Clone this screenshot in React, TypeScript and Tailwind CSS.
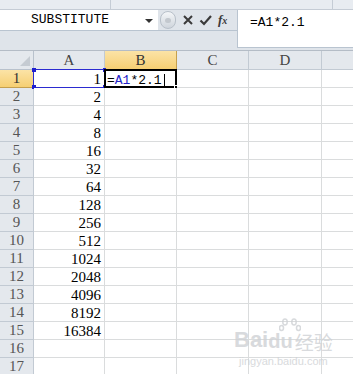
import React from 'react';

const mono = { fontFamily: '"Liberation Mono", "DejaVu Sans Mono", monospace' };
const serif = { fontFamily: '"Liberation Serif", "DejaVu Serif", serif' };

const values = [1, 2, 4, 8, 16, 32, 64, 128, 256, 512, 1024, 2048, 4096, 8192, 16384, null, null];
// E is only partly visible, its letter falls outside the window
const cols = [
  { key: 'A', label: 'A', w: 'w-[71px]' },
  { key: 'B', label: 'B', w: 'w-[72px]' },
  { key: 'C', label: 'C', w: 'w-[72px]' },
  { key: 'D', label: 'D', w: 'w-[73px]' },
  { key: 'E', label: '', w: 'w-[72px]' },
];

function FormulaBar() {
  return (
    <div className="flex h-[40px] bg-[#dfe4ea]">
      <div className="w-[237px] flex flex-col">
        <div className="flex h-[21px] items-center bg-white border-b border-[#b9c4d0]">
          <div className="w-[158px] h-full flex items-center justify-center relative text-[13px] text-black" style={mono}>
            <span className="pr-[18px]">SUBSTITUTE</span>
            <span className="absolute right-[5px] top-[9px] w-0 h-0 border-l-[4px] border-r-[4px] border-t-[4px] border-l-transparent border-r-transparent border-t-[#333]" />
          </div>
          <div className="flex-1 h-full bg-[#dfe4ea] flex items-center">
            <div className="w-[16px] h-[18px] rounded-full bg-gradient-to-b from-[#f4f6f8] to-[#cfd5dc] border border-[#b8c0c9] flex items-center justify-center ml-[2px]">
              <div className="w-[6px] h-[5px] rounded-full bg-[#c3c8ce]" />
            </div>
            <svg width="12" height="12" viewBox="0 0 12 12" className="ml-[6px]">
              <path d="M2 2 L10 10 M10 2 L2 10" stroke="#3a3a3a" strokeWidth="2" />
            </svg>
            <svg width="13" height="12" viewBox="0 0 13 12" className="ml-[5px]">
              <path d="M1.5 6.5 L5 10 L12 2" stroke="#3a3a3a" strokeWidth="2.2" fill="none" />
            </svg>
            <span className="ml-[6px] text-[13px] italic font-bold text-[#3a3a3a]" style={serif}>
              f<span className="text-[10px]">x</span>
            </span>
          </div>
        </div>
        <div className="flex-1" />
      </div>
      <div className="flex-1 h-[38px] bg-white border-l border-b border-[#b9c4d0] pl-[12px] pt-[3px] text-[13px] text-black" style={mono}>
        =A1*2.1
      </div>
    </div>
  );
}

function HeaderRow() {
  return (
    <div className="flex h-[20px] border-t border-[#b4bcc6]">
      <div className="w-[34px] flex-none bg-[#e4e8ed] border-r border-b border-[#b8c1cc] relative">
        <svg width="10" height="10" viewBox="0 0 10 10" className="absolute right-[3px] bottom-[3px]">
          <polygon points="10,0 10,10 0,10" fill="#c5cbd2" />
        </svg>
      </div>
      {cols.map((c) => (
        <div
          key={c.key}
          className={`${c.w} flex-none flex items-center justify-center border-r border-b text-[15px] ${
            c.key === 'B'
              ? 'bg-gradient-to-b from-[#fbe3a6] to-[#f6cf72] border-[#c5a04e] text-[#333]'
              : 'bg-[#e4e8ed] border-[#c2cad3] text-[#444]'
          }`}
          style={serif}
        >
          {c.label}
        </div>
      ))}
    </div>
  );
}

function Row({ n, v }: { n: number; v: number | null }) {
  const sel = n === 1;
  return (
    <div className="flex h-[18px]">
      <div
        className={`w-[34px] flex-none flex items-center justify-center border-r border-b text-[15px] ${
          sel
            ? 'bg-gradient-to-b from-[#fbe3a6] to-[#f6cf72] border-[#c5a04e] text-[#333]'
            : 'bg-[#e4e8ed] border-[#c2cad3] text-[#555]'
        }`}
        style={serif}
      >
        {n}
      </div>
      {cols.map((c) => (
        <div key={c.key} className={`${c.w} flex-none relative border-r border-b border-[#dadcdd] bg-white text-[15px] text-black`} style={serif}>
          {c.key === 'A' && v !== null && (
            <span className="absolute right-[3px] top-0 leading-[18px]">{v}</span>
          )}
          {sel && c.key === 'A' && (
            <>
              <div className="absolute -left-[1px] -top-[1px] -right-[1px] -bottom-[1px] border border-[#2b2bd0]" />
              <div className="absolute -left-[2px] -top-[2px] w-[4px] h-[4px] bg-[#2020d0]" />
              <div className="absolute -left-[2px] -bottom-[2px] w-[4px] h-[4px] bg-[#2020d0]" />
              <div className="absolute -right-[2px] -top-[2px] w-[3px] h-[4px] bg-[#2020d0]" />
              <div className="absolute -right-[2px] -bottom-[2px] w-[3px] h-[4px] bg-[#2020d0]" />
            </>
          )}
          {sel && c.key === 'B' && (
            <>
              <div className="absolute -left-[1px] -top-[1px] -right-[1px] -bottom-[1px] border-2 border-black" />
              <span className="absolute left-[2px] top-[1px] text-[13px]" style={mono}>
                =<span className="text-[#2323c8]">A1</span>*2.1<span className="inline-block w-[1px] h-[13px] bg-black align-middle ml-[2px]" />
              </span>
              <div className="absolute -right-[3px] -bottom-[3px] w-[5px] h-[5px] bg-black border border-white" />
            </>
          )}
        </div>
      ))}
    </div>
  );
}

export default function App() {
  return (
    <div className="w-[353px] h-[374px] overflow-hidden bg-white relative">
      <div className="h-[10px] bg-[#e8ecf1] border-b border-[#c5ccd5] flex">
        <div className="w-[111px] border-r border-[#c5ccd5]" />
        <div className="w-[222px] border-r border-[#c5ccd5]" />
      </div>
      <FormulaBar />
      <HeaderRow />
      {values.map((v, i) => (
        <Row key={i} n={i + 1} v={v} />
      ))}
      <div className="absolute left-[234px] top-[318px] flex flex-col items-center text-[#cfd2d5] opacity-80 pointer-events-none">
        <svg width="22" height="14" viewBox="0 0 22 14" className="ml-[14px] -mb-[3px]">
          <g fill="none" stroke="#cfd2d5" strokeWidth="1.5">
            <ellipse cx="6" cy="4" rx="2.2" ry="3" />
            <ellipse cx="15" cy="4" rx="2.2" ry="3" />
            <ellipse cx="2.5" cy="10" rx="2" ry="2.5" />
            <ellipse cx="19.5" cy="10" rx="2" ry="2.5" />
          </g>
        </svg>
        <div className="flex items-end leading-none">
          <span className="text-[22px] font-bold" style={{ fontFamily: '"Liberation Sans", sans-serif' }}>Bai</span>
          <span className="text-[20px] font-bold" style={{ fontFamily: '"Liberation Sans", sans-serif' }}>du</span>
          <span className="text-[19px] ml-[2px]" style={{ fontFamily: '"Noto Sans CJK SC", sans-serif' }}>经验</span>
        </div>
        <span className="text-[11px] mt-[2px]" style={{ fontFamily: '"Liberation Sans", sans-serif' }}>jingyan.baidu.com</span>
      </div>
    </div>
  );
}
